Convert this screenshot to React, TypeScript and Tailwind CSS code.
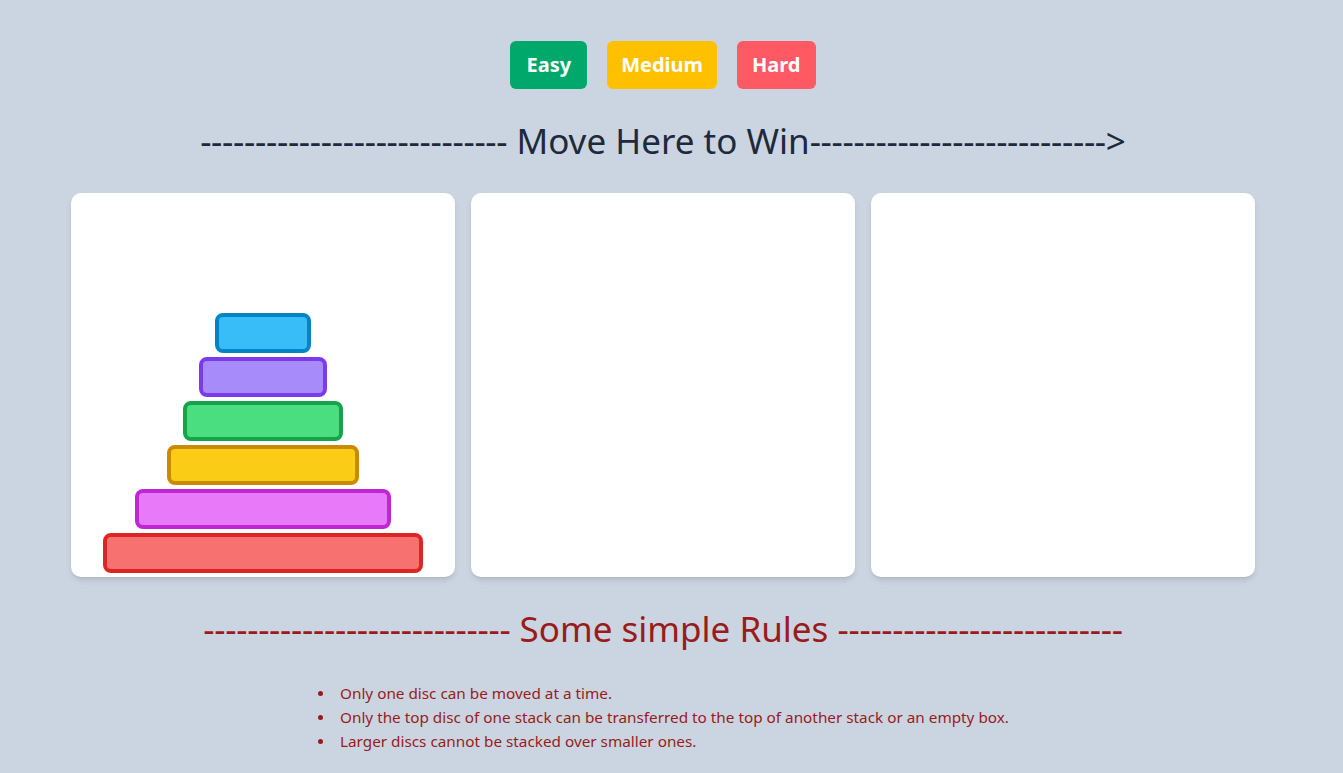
import React from "react";

const discs = [
  { w: "w-24", c: "bg-[#38bdf8] border-[#0284c7]" },
  { w: "w-32", c: "bg-[#a78bfa] border-[#7c3aed]" },
  { w: "w-40", c: "bg-[#4ade80] border-[#16a34a]" },
  { w: "w-48", c: "bg-[#facc15] border-[#ca8a04]" },
  { w: "w-64", c: "bg-[#e879f9] border-[#c026d3]" },
  { w: "w-80", c: "bg-[#f87171] border-[#dc2626]" },
];

const rules = [
  "Only one disc can be moved at a time.",
  "Only the top disc of one stack can be transferred to the top of another stack or an empty box.",
  "Larger discs cannot be stacked over smaller ones.",
];

export default function App() {
  return (
    <div
      className="min-h-[773px] bg-[#cbd5e1] pr-[17px]"
      style={{ fontFamily: '"Noto Sans", "Open Sans", sans-serif' }}
    >
      <div className="flex flex-col items-center pt-[41px]">
        <div className="flex gap-5">
          <button className="h-12 px-4 rounded-md bg-[#00a86b] text-white text-xl font-bold">Easy</button>
          <button className="h-12 px-[14px] rounded-md bg-[#ffc000] text-white text-xl font-bold">Medium</button>
          <button className="h-12 px-[15px] rounded-md bg-[#ff5963] text-white text-xl font-bold">Hard</button>
        </div>
        <h1 className="mt-8 text-[35px] leading-10 text-[#1e293b] whitespace-nowrap">
          <span className="tracking-[-0.3px]">----------------------------</span> Move Here to Win
          <span className="tracking-[-0.3px]">---------------------------</span>&gt;
        </h1>
        <div className="mt-8 flex gap-4">
          <div className="w-96 h-96 bg-white rounded-[10px] shadow-md flex flex-col items-center justify-end gap-1 pb-1">
            {discs.map((d, i) => (
              <div key={i} className={`${d.w} ${d.c} h-10 border-4 rounded-lg`} />
            ))}
          </div>
          <div className="w-96 h-96 bg-white rounded-[10px] shadow-md" />
          <div className="w-96 h-96 bg-white rounded-[10px] shadow-md" />
        </div>
        <h2 className="mt-8 text-[35px] leading-10 text-[#991b1b] whitespace-nowrap">
          <span className="tracking-[-0.3px]">----------------------------</span> Some simple Rules{" "}
          <span className="tracking-[-0.3px]">--------------------------</span>
        </h2>
      </div>
      <ul className="mt-8 pl-[318px] text-[15.3px] leading-6 text-[#991b1b] pb-4">
        {rules.map((r) => (
          <li key={r} className="flex items-center gap-[17px]">
            <span className="w-[5px] h-[5px] rounded-full bg-[#991b1b] shrink-0" />
            <span>{r}</span>
          </li>
        ))}
      </ul>
    </div>
  );
}
